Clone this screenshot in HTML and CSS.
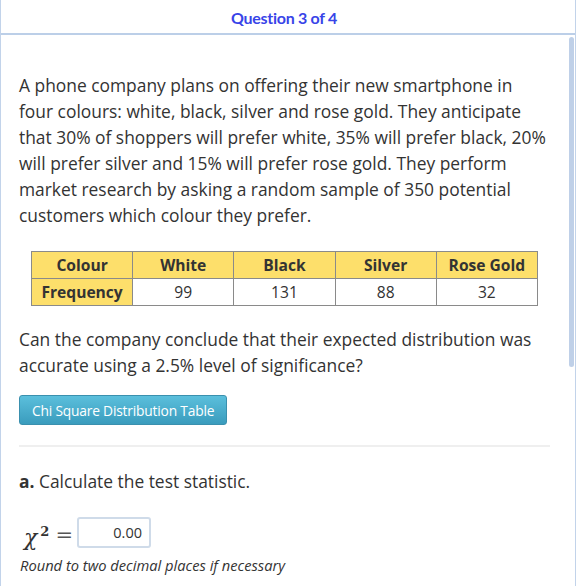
FILE: index.html
```html
<!DOCTYPE html>
<html>
<head>
<meta charset="utf-8">
<link rel="stylesheet" href="styles.css">
</head>
<body>
<div class="frame">
  <div class="header"><span class="qnum">Question 3 of 4</span></div>
  <div class="content">
    <p class="para first">A phone company plans on offering their new smartphone in four colours: white, black, silver and rose gold. They anticipate that 30% of shoppers will prefer white, 35% will prefer black, 20% will prefer silver and 15% will prefer rose gold. They perform market research by asking a random sample of 350 potential customers which colour they prefer.</p>
    <table class="data">
      <tr><th>Colour</th><th>White</th><th>Black</th><th>Silver</th><th>Rose Gold</th></tr>
      <tr><th>Frequency</th><td>99</td><td>131</td><td>88</td><td>32</td></tr>
    </table>
    <p class="para second">Can the company conclude that their expected distribution was accurate using a 2.5% level of significance?</p>
    <button class="btn">Chi Square Distribution Table</button>
    <div class="rule"></div>
    <p class="part"><b>a.</b> Calculate the test statistic.</p>
    <div class="answer">
      <span class="chi">χ<sup>2</sup></span><span class="eq">=</span>
      <span class="input">0.00</span>
    </div>
    <p class="hint">Round to two decimal places if necessary</p>
  </div>
  <div class="scrollthumb"></div>
</div>
</body>
</html>
```

FILE: styles.css
```css
html, body { margin: 0; padding: 0; background: #fff; }
.frame {
  position: relative;
  width: 576px;
  height: 586px;
  box-sizing: border-box;
  border-left: 1px solid #c2d3ea;
  border-right: 1px solid #c2d3ea;
  overflow: hidden;
  font-family: "Open Sans", sans-serif;
  color: #333;
}
.header {
  height: 33px;
  border-bottom: 2px solid #bccfe8;
  display: flex;
  align-items: center;
  justify-content: center;
}
.qnum {
  font-family: Lato, sans-serif;
  font-weight: 700;
  font-size: 16px;
  color: #3844e8;
  letter-spacing: -0.3px;
  margin-left: -8px;
  margin-top: 1px;
}
.content { padding: 0 18px; }
.para {
  font-size: 17.4px;
  line-height: 26px;
  margin: 0;
  width: 531px;
}
.first { padding-top: 37px; }
.data {
  border-collapse: collapse;
  margin: 23px 0 0 12px;
  table-layout: fixed;
  width: 507px;
}
.data th, .data td {
  border: 1px solid #8a8a8a;
  height: 26px;
  padding: 0;
  font-size: 15.6px;
  text-align: center;
  line-height: 26px;
}
.data th { background: #fddf6b; font-weight: 700; }
.data td { background: #fff; }
.second { margin-top: 20px; }
.btn {
  display: block;
  margin-top: 17px;
  height: 30px;
  padding: 0 12px;
  border: 1px solid #3a90ae;
  border-radius: 3px;
  background: linear-gradient(#5bbfdc, #3a9cbd);
  color: #fff;
  font-family: "Open Sans", sans-serif;
  font-size: 13.8px;
  letter-spacing: -0.2px;
}
.rule {
  margin-top: 20px;
  width: 531px;
  height: 2px;
  background: #efefef;
}
.part {
  font-size: 17.4px;
  line-height: 26px;
  margin: 21px 0 0;
}
.part b { font-weight: 700; }
.answer {
  display: flex;
  align-items: center;
  margin-top: 22px;
  height: 32px;
}
.chi {
  font-family: "DejaVu Serif", serif;
  font-style: italic;
  font-size: 22px;
  margin-left: 5px;
  margin-top: 10px;
}
.chi sup { font-style: normal; font-size: 13px; font-weight: 700; margin-left: 3px; vertical-align: 9px; }
.eq {
  font-family: "DejaVu Serif", serif;
  font-size: 21px;
  color: #555;
  margin-left: 6px;
  margin-top: 6px;
}
.input {
  margin-left: 4px;
  width: 74px;
  height: 31px;
  box-sizing: border-box;
  border: 2px solid #cfdbe9;
  border-radius: 3px;
  font-size: 14.5px;
  text-align: right;
  padding-right: 7px;
  line-height: 28px;
}
.hint {
  font-style: italic;
  font-size: 14.7px;
  margin: 7px 0 0 1px;
}
.scrollthumb {
  position: absolute;
  left: 568px;
  top: 37px;
  width: 5px;
  height: 330px;
  border-radius: 3px;
  background: #bfd0e8;
}
```
